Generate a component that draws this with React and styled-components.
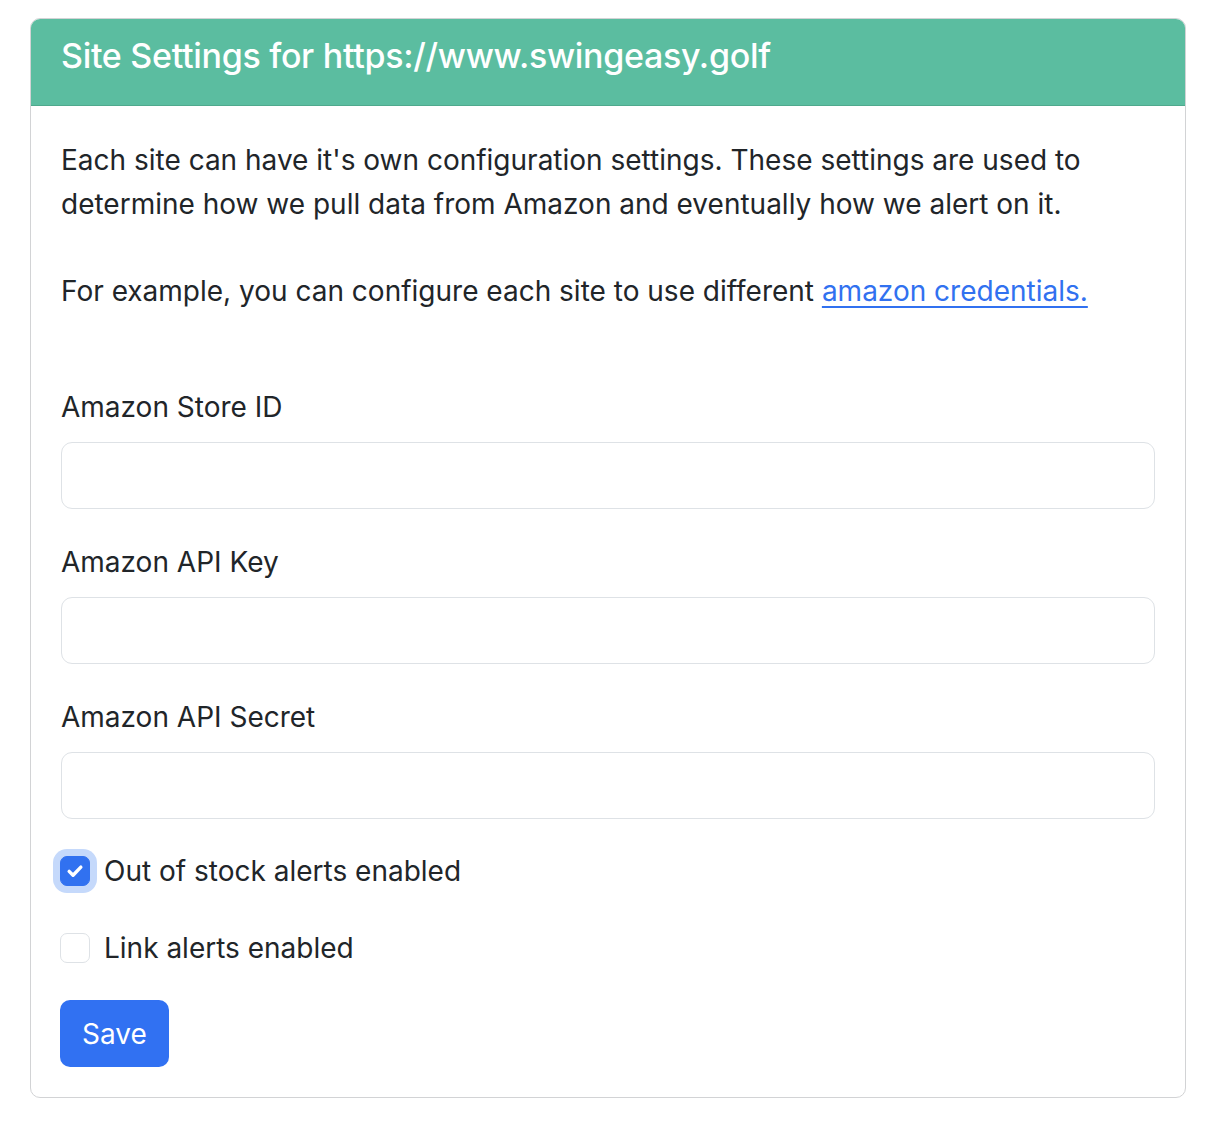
import React, { useState } from "react";
import styled, { createGlobalStyle } from "styled-components";

const GlobalStyle = createGlobalStyle`
  body {
    margin: 0;
    background: #fff;
    font-family: Inter, "Noto Sans", "Liberation Sans", sans-serif;
    color: #212529;
  }
`;

const Page = styled.div`
  padding: 18px 32px 36px 30px;
`;

const Card = styled.div`
  border: 1px solid #d2d3d5;
  border-radius: 10px;
  overflow: hidden;
  background: #fff;
`;

const CardHeader = styled.div`
  background: #5bbda0;
  border-bottom: 1px solid #4fa98d;
  height: 87px;
  padding: 0 30px;
  display: flex;
  align-items: center;
  box-sizing: border-box;
`;

const Title = styled.h4`
  margin: 0 0 13px;
  color: #fff;
  font-size: 34px;
  font-weight: 500;
  letter-spacing: -0.3px;
`;

const CardBody = styled.div`
  padding: 32px 30px 30px;
  font-size: 28px;
  line-height: 44px;
`;

const Para = styled.p`
  margin: 0 0 ${(p) => p.$gap || 0}px;
`;

const Link = styled.a`
  color: #3171f0;
  text-decoration: underline;
  text-underline-offset: 5px;
  text-decoration-thickness: 2px;
`;

const Field = styled.div`
  margin-top: ${(p) => p.$top}px;
`;

const Label = styled.label`
  display: block;
  margin-bottom: 13px;
`;

const Input = styled.input`
  display: block;
  width: 100%;
  box-sizing: border-box;
  height: 67px;
  border: 1px solid #dee2e6;
  border-radius: 11px;
  font: inherit;
  padding: 0 20px;
  outline: none;
`;

const CheckRow = styled.label`
  display: flex;
  align-items: center;
  gap: 14px;
  margin-top: ${(p) => p.$top}px;
  cursor: pointer;
`;

const Box = styled.span`
  width: 30px;
  height: 30px;
  margin-left: -1px;
  box-sizing: border-box;
  border-radius: 7px;
  border: 1px solid ${(p) => (p.$checked ? "#3171f0" : "#dee2e6")};
  background: ${(p) => (p.$checked ? "#3171f0" : "#fff")};
  box-shadow: ${(p) => (p.$focus ? "0 0 0 7px #c5d9fb" : "none")};
  display: flex;
  align-items: center;
  justify-content: center;
  flex-shrink: 0;
`;

const SaveButton = styled.button`
  margin-top: 30px;
  margin-left: -1px;
  height: 67px;
  padding: 0 22px;
  border: none;
  border-radius: 10px;
  background: #3171f2;
  color: #fff;
  font: inherit;
  font-size: 28px;
  cursor: pointer;
`;

function Checkbox({ label, checked, focus, top, onToggle }) {
  return (
    <CheckRow $top={top} onClick={onToggle}>
      <Box $checked={checked} $focus={focus}>
        {checked && (
          <svg width="26" height="26" viewBox="0 0 20 20">
            <path
              d="m5.5 10.3 3 3 6-6.3"
              fill="none"
              stroke="#fff"
              strokeWidth="2.6"
              strokeLinecap="round"
              strokeLinejoin="round"
            />
          </svg>
        )}
      </Box>
      {label}
    </CheckRow>
  );
}

export default function App() {
  const [stock, setStock] = useState(true);
  const [links, setLinks] = useState(false);

  return (
    <Page>
      <GlobalStyle />
      <Card>
        <CardHeader>
          <Title>Site Settings for https://www.swingeasy.golf</Title>
        </CardHeader>
        <CardBody>
          <Para $gap={43}>
            Each site can have it's own configuration settings. These settings are used to
            determine how we pull data from Amazon and eventually how we alert on it.
          </Para>
          <Para>
            For example, you can configure each site to use different{" "}
            <Link href="#">amazon credentials.</Link>
          </Para>

          <Field $top={72}>
            <Label>Amazon Store ID</Label>
            <Input type="text" />
          </Field>
          <Field $top={31}>
            <Label>Amazon API Key</Label>
            <Input type="text" />
          </Field>
          <Field $top={31}>
            <Label>Amazon API Secret</Label>
            <Input type="text" />
          </Field>

          <Checkbox
            label="Out of stock alerts enabled"
            checked={stock}
            focus
            top={30}
            onToggle={() => setStock(!stock)}
          />
          <Checkbox
            label="Link alerts enabled"
            checked={links}
            top={33}
            onToggle={() => setLinks(!links)}
          />

          <SaveButton type="button">Save</SaveButton>
        </CardBody>
      </Card>
    </Page>
  );
}
